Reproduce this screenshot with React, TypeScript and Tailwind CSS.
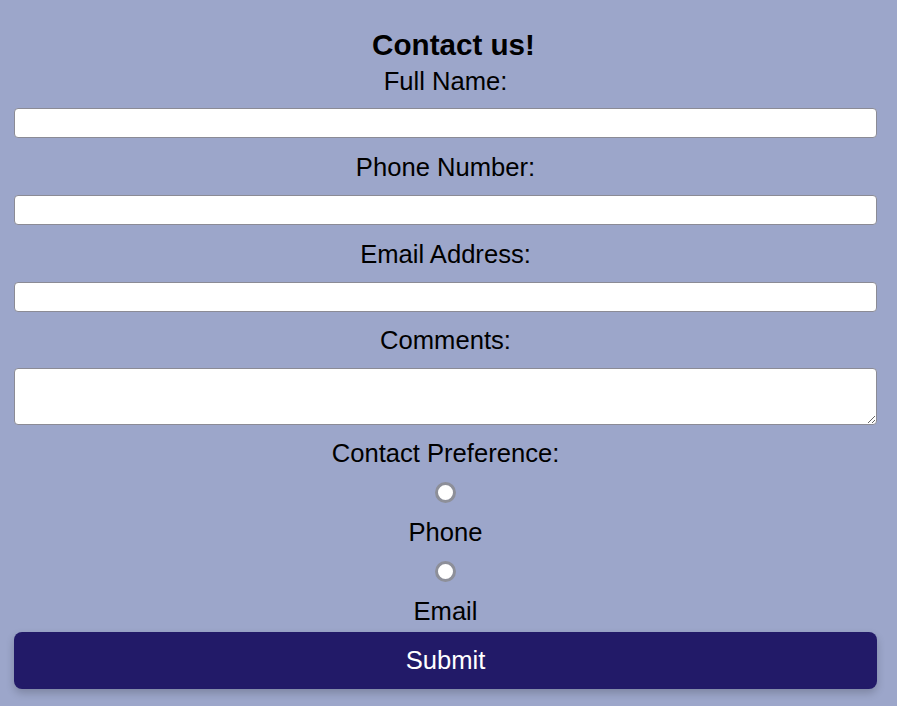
const Field = ({ label }: { label: string }) => {
    return (
        <>
            <label className="text-[25.6px] leading-[28px] mt-[15px]">{label}</label>
            <input type="text" className="mt-[14px] w-full h-[30px] bg-white border border-[#8b8b95] rounded-[4px] outline-none" />
        </>
    )
}

const Radio = ({ label }: { label: string }) => {
    return (
        <>
            <input type="radio" name="pref" className="appearance-none mt-[15px] w-[21px] h-[21px] rounded-full bg-white border-[3px] border-[#8d8f99]" />
            <span className="text-[25.6px] leading-[28px] mt-[15px]">{label}</span>
        </>
    )
}

export default function App() {
    return (
        <div className="min-h-[706px] bg-[#9ca6ca] pl-[14px] pr-[20px] pt-[29px] pb-[17px] text-black" style={{ fontFamily: '"Liberation Sans", Arial, sans-serif' }}>
            <form className="flex flex-col items-center">
                <h1 className="text-[29.6px] leading-[32px] font-bold ml-[16px]">Contact us!</h1>
                <label className="text-[25.6px] leading-[28px] mt-[6px]">Full Name:</label>
                <input type="text" className="mt-[13px] w-full h-[30px] bg-white border border-[#8b8b95] rounded-[4px] outline-none" />
                <Field label="Phone Number:" />
                <Field label="Email Address:" />
                <label className="text-[25.6px] leading-[28px] mt-[14px]">Comments:</label>
                <textarea className="mt-[14px] w-full h-[57px] bg-white border border-[#8b8b95] rounded-[4px] outline-none block" />
                <label className="text-[25.6px] leading-[28px] mt-[14px]">Contact Preference:</label>
                <Radio label="Phone" />
                <Radio label="Email" />
                <button type="button" className="mt-[7px] w-full h-[57px] bg-[#221a68] text-white text-[25.6px] rounded-[8px] shadow-[0_4px_8px_rgba(0,0,0,0.2)]">
                    Submit
                </button>
            </form>
        </div>
    )
}
